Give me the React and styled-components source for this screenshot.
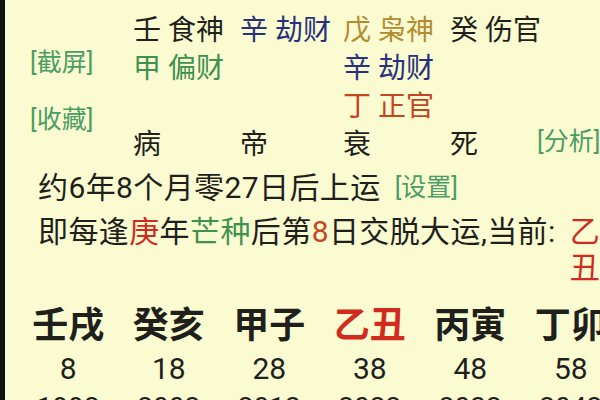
import styled, { createGlobalStyle } from "styled-components";

const GlobalStyle = createGlobalStyle`
  html, body {
    margin: 0;
    padding: 0;
    background: #fbfbd2;
  }
`;

const colors = {
  black: "#1f1f1c",
  blue: "#27317c",
  olive: "#b38b31",
  rust: "#c2461f",
  green: "#3f9150",
  label: "#4a9d63",
  red: "#d12b20",
};

const Screen = styled.div`
  width: 600px;
  height: 400px;
  overflow: hidden;
  box-sizing: border-box;
  border-left: 5px solid #111;
  background: #fbfbd2;
  color: ${colors.black};
  font-family: Roboto, "Noto Sans CJK SC", sans-serif;
`;

const TopBlock = styled.div`
  display: flex;
  margin-top: -39px;
  padding-left: 25px;
`;

const LabelColumn = styled.div`
  flex: none;
  width: 103px;
  display: flex;
  flex-direction: column;
  gap: 19px;
  padding-top: 83px;
`;

const Label = styled.span`
  font-size: 25px;
  line-height: 38px;
  color: ${colors.label};
  white-space: nowrap;
`;

const PillarGrid = styled.div`
  display: grid;
  grid-template-columns: 107px 103px 107px 87px auto;
  grid-template-rows: 48px repeat(4, 38px);
  align-items: center;
  font-size: 28px;
  white-space: nowrap;
`;

const Cell = styled.span`
  color: ${(p) => colors[p.$tone] || colors.black};
  grid-column: ${(p) => p.$col || "auto"};
  opacity: ${(p) => (p.$faint ? 0.6 : 1)};
`;

const SideLabel = styled(Label)`
  grid-column: 5;
  grid-row: 5;
`;

const Line = styled.div`
  display: flex;
  align-items: flex-start;
  padding-left: 33px;
  font-size: 30px;
  letter-spacing: 0.4px;
  line-height: ${(p) => p.$lh || 36}px;
  margin-top: ${(p) => p.$mt || 0}px;
  white-space: nowrap;
`;

const Mark = styled.span`
  color: ${(p) => colors[p.$tone]};
`;

const Setting = styled(Label)`
  margin-left: 14px;
  line-height: 40px;
  letter-spacing: 0;
`;

const CurrentStack = styled.span`
  width: 30px;
  margin-left: 14px;
  white-space: normal;
  color: ${colors.red};
  word-break: break-all;
`;

const CycleGrid = styled.div`
  display: grid;
  grid-template-columns: repeat(6, 100.5px);
  padding-left: 13px;
  text-align: center;
  white-space: nowrap;
`;

const Pillar = styled.div`
  font-size: 36px;
  font-weight: 700;
  line-height: 44px;
  margin-top: 18px;
  color: ${(p) => (p.$current ? colors.red : colors.black)};
`;

const Age = styled.div`
  font-size: 30px;
  line-height: 36px;
  margin-top: 3px;
`;

const Year = styled.div`
  font-size: 28px;
  line-height: 36px;
  margin-top: 3px;
`;

const rows = [
  [["戌", "black"], ["亥", "black"], ["子", "black"], ["丑", "black"]],
  [["壬 食神", "black"], ["辛 劫财", "blue"], ["戊 枭神", "olive"], ["癸 伤官", "black"]],
  [["甲 偏财", "green"], null, ["辛 劫财", "blue"], null],
  [null, null, ["丁 正官", "rust"], null],
  [["病", "black"], ["帝", "black"], ["衰", "black"], ["死", "black"]],
];

const cycles = [
  { gz: "壬戌", age: 8, year: 1992 },
  { gz: "癸亥", age: 18, year: 2002 },
  { gz: "甲子", age: 28, year: 2012 },
  { gz: "乙丑", age: 38, year: 2022, current: true },
  { gz: "丙寅", age: 48, year: 2032 },
  { gz: "丁卯", age: 58, year: 2042 },
];

export default function App() {
  return (
    <Screen>
      <GlobalStyle />
      <TopBlock>
        <LabelColumn>
          <Label>[截屏]</Label>
          <Label>[收藏]</Label>
        </LabelColumn>
        <PillarGrid>
          {rows.map((row, r) =>
            row.map((c, i) => (
              <Cell
                key={`${r}-${i}`}
                $col={i + 1}
                $faint={r === 0}
                $tone={c ? c[1] : "black"}
              >
                {c ? c[0] : ""}
              </Cell>
            ))
          )}
          <SideLabel>[分析]</SideLabel>
        </PillarGrid>
      </TopBlock>

      <Line $lh={40} $mt={7}>
        约6年8个月零27日后上运
        <Setting>[设置]</Setting>
      </Line>

      <Line $mt={6}>
        <span>
          即每逢<Mark $tone="red">庚</Mark>年<Mark $tone="green">芒种</Mark>后第
          <Mark $tone="rust">8</Mark>日交脱大运,当前:
        </span>
        <CurrentStack>乙丑</CurrentStack>
      </Line>

      <CycleGrid>
        {cycles.map((c) => (
          <Pillar key={c.gz} $current={c.current}>
            {c.gz}
          </Pillar>
        ))}
        {cycles.map((c) => (
          <Age key={c.age}>{c.age}</Age>
        ))}
        {cycles.map((c) => (
          <Year key={c.year}>{c.year}</Year>
        ))}
      </CycleGrid>
    </Screen>
  );
}
